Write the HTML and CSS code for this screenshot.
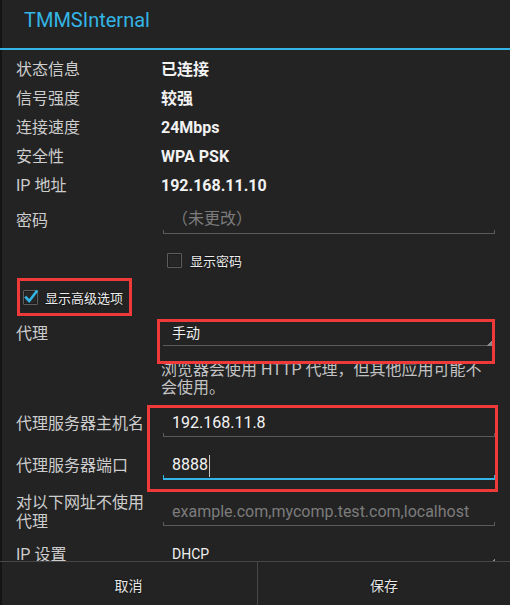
FILE: index.html
```html
<!DOCTYPE html>
<html lang="zh-CN">
<head>
<meta charset="utf-8">
<title>TMMSInternal</title>
<link rel="stylesheet" href="styles.css">
</head>
<body>
<div class="dialog">
  <div class="title">TMMSInternal</div>
  <div class="content">
    <div class="row info"><span class="label">状态信息</span><span class="value">已连接</span></div>
    <div class="row info"><span class="label">信号强度</span><span class="value">较强</span></div>
    <div class="row info"><span class="label">连接速度</span><span class="value">24Mbps</span></div>
    <div class="row info"><span class="label">安全性</span><span class="value">WPA PSK</span></div>
    <div class="row info"><span class="label">IP 地址</span><span class="value">192.168.11.10</span></div>
    <div class="row pwd"><span class="label">密码</span><div class="field"><span class="hint">（未更改）</span></div></div>
    <div class="row show-pwd"><span class="check"></span><span class="check-text">显示密码</span></div>
    <div class="row adv-row">
      <div class="adv">
        <span class="check checked"><svg width="15" height="15" viewBox="0 0 15 15"><path d="M3 7.5 L6.2 11 L13.5 1.5" fill="none" stroke="#33b5e5" stroke-width="2.6" stroke-linecap="square"/></svg></span>
        <span class="check-text">显示高级选项</span>
      </div>
    </div>
    <div class="row proxy">
      <span class="label">代理</span>
      <div class="col">
        <div class="spinner">手动<span class="mark spin-mark"></span></div>
        <p class="help">浏览器会使用 HTTP 代理，但其他应用可能不会使用。</p>
      </div>
    </div>
    <div class="group">
      <div class="row inp"><span class="label">代理服务器主机名</span><div class="field text">192.168.11.8</div></div>
      <div class="row inp"><span class="label">代理服务器端口</span><div class="field text focused">8888<span class="caret"></span></div></div>
      <span class="mark group-mark"></span>
    </div>
    <div class="row bypass"><span class="label">对以下网址不使用代理</span><div class="field"><span class="hint">example.com,mycomp.test.com,localhost</span></div></div>
    <div class="row ipset"><span class="label">IP 设置</span><div class="spinner dhcp">DHCP</div></div>
  </div>
  <div class="buttons"><div class="btn cancel">取消</div><div class="btn save">保存</div></div>
</div>
</body>
</html>
```
FILE: styles.css
```css
* { box-sizing: border-box; }
html, body { margin: 0; padding: 0; }
body {
  background: #232323;
  font-family: Roboto, "Noto Sans CJK SC", sans-serif;
  color: #d0d0d0;
}
.dialog {
  width: 510px;
  height: 605px;
  display: flex;
  flex-direction: column;
  background: #232323;
  box-shadow: inset 2px 0 #141414;
  overflow: hidden;
}
.title {
  height: 50px;
  padding: 0 0 8px 24px;
  font-size: 20px;
  line-height: 40px;
  color: #33b5e5;
  border-bottom: 2px solid #33b5e5;
  flex: none;
}
.content {
  flex: 1;
  min-height: 0;
  overflow: hidden;
  padding-top: 5px;
}
.row { display: flex; }
.label {
  width: 161px;
  padding-left: 16px;
  padding-right: 14px;
  flex: none;
  font-size: 16px;
  color: #cdcdcd;
  line-break: anywhere;
}
.info { height: 29px; line-height: 29px; }
.value { font-size: 16px; font-weight: bold; color: #f2f2f2; }

.field {
  margin-left: 2px;
  width: 332px;
  padding-left: 9px;
  font-size: 16px;
  color: #f4f4f4;
  white-space: nowrap;
  background:
    linear-gradient(#5a5a5a, #5a5a5a) left bottom / 1px 4px no-repeat,
    linear-gradient(#5a5a5a, #5a5a5a) right bottom / 1px 4px no-repeat,
    linear-gradient(#5a5a5a, #5a5a5a) left bottom / 100% 1px no-repeat;
}
.hint { color: #7c7c7c; }

.pwd { height: 42px; }
.pwd .label { line-height: 42px; }
.pwd .field { margin-top: 5px; height: 29px; line-height: 28px; }

.show-pwd { height: 36px; align-items: center; padding-left: 167px; }
.check {
  width: 15px;
  height: 15px;
  flex: none;
  border: 1px solid #5c5c5c;
  border-radius: 1px;
  background: #262626;
  box-shadow: inset 0 0 0 1px #1c1c1c;
}
.check svg { display: block; margin: -1px 0 0 -1px; overflow: visible; }
.check-text { font-size: 13px; color: #ececec; margin-left: 8px; text-shadow: 0 0 2px #000; }

.adv-row { height: 38px; }
.adv {
  margin-left: 17px;
  width: 115px;
  height: 38px;
  border: 3px solid #f03a3a;
  display: flex;
  align-items: center;
  padding-left: 3px;
}
.adv .check-text { margin-left: 7px; }

.proxy .label { line-height: 36px; }
.col { flex: 1; min-width: 0; }
.spinner {
  position: relative;
  margin: 5px 0 0 2px;
  width: 332px;
  height: 25px;
  padding-left: 9px;
  font-size: 14px;
  line-height: 24px;
  color: #f0f0f0;
  background:
    linear-gradient(to bottom right, transparent 50%, #8a8a8a 50%) right bottom / 8px 8px no-repeat,
    linear-gradient(#5a5a5a, #5a5a5a) left bottom / 100% 1px no-repeat;
}
.help {
  margin: 15px 20px 0 0;
  font-size: 16px;
  line-height: 18px;
  color: #c2c2c2;
}
.mark {
  position: absolute;
  border: 3px solid #f03a3a;
  pointer-events: none;
}
.spin-mark { left: -6px; top: -2px; width: 338px; height: 45px; }

.group { position: relative; margin-top: 6px; }
.inp { height: 42px; }
.inp .label { line-height: 42px; }
.field.text { margin-top: 7px; height: 27px; line-height: 26px; }
.field.focused {
  height: 28px;
  background:
    linear-gradient(#33b5e5, #33b5e5) left bottom / 1px 5px no-repeat,
    linear-gradient(#33b5e5, #33b5e5) right bottom / 1px 5px no-repeat,
    linear-gradient(#33b5e5, #33b5e5) left bottom / 100% 2px no-repeat;
}
.caret {
  display: inline-block;
  width: 1px;
  height: 22px;
  margin-left: 1px;
  background: #c8c8c8;
  vertical-align: middle;
}
.group-mark { left: 147px; top: 2px; width: 351px; height: 87px; }

.bypass { height: 53px; }
.bypass .label { padding-top: 6px; line-height: 19px; }
.bypass .field { margin-top: 12px; height: 27px; line-height: 26px; }

.ipset { height: 29px; }
.ipset .label { line-height: 29px; }
.dhcp { margin-top: 2px; }

.buttons {
  flex: none;
  height: 44px;
  border-top: 1px solid #474747;
  display: flex;
}
.btn {
  padding-top: 5px;
  line-height: 38px;
  font-size: 14px;
  color: #e6e6e6;
  text-align: center;
  text-shadow: 0 0 2px #000;
}
.cancel { width: 257px; flex: none; }
.save { flex: 1; border-left: 1px solid #474747; }
```
